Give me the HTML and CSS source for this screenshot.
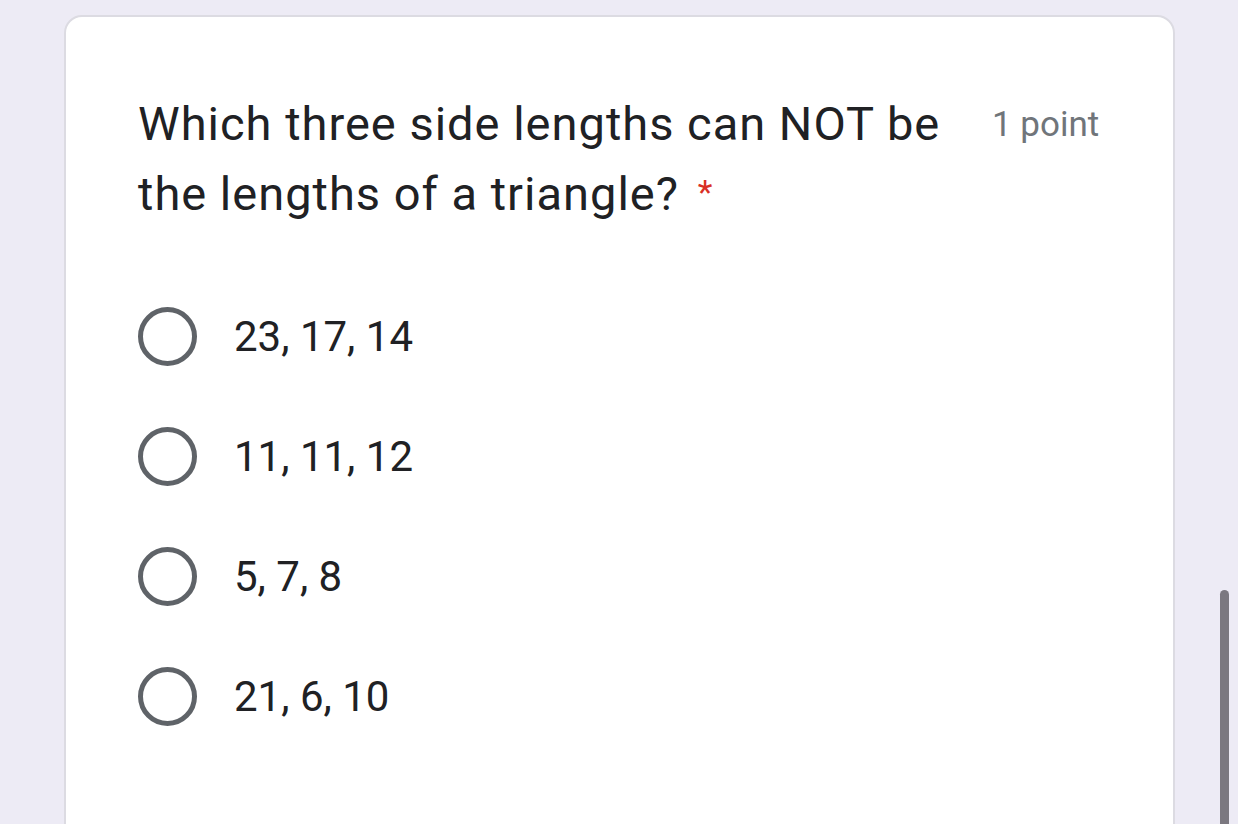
FILE: index.html
```html
<!DOCTYPE html>
<html lang="en">
<head>
    <meta charset="UTF-8">
    <meta name="viewport" content="width=device-width, initial-scale=1.0">
    <title>Quiz question</title>
    <link rel="stylesheet" href="styles.css">
</head>
<body>
    <div class="card">
        <div class="question">
            <div class="title">Which three side lengths can NOT be the lengths of a triangle? <span class="required">*</span></div>
            <div class="points">1 point</div>
        </div>

        <div class="options">
            <label class="option"><span class="radio"></span><span class="label">23, 17, 14</span></label>
            <label class="option"><span class="radio"></span><span class="label">11, 11, 12</span></label>
            <label class="option"><span class="radio"></span><span class="label">5, 7, 8</span></label>
            <label class="option"><span class="radio"></span><span class="label">21, 6, 10</span></label>
        </div>
    </div>

    <div class="scrollbar"></div>
</body>
</html>
```

FILE: styles.css
```css
body {
    font-family: Roboto, "Liberation Sans", sans-serif;
    background-color: #edebf5;
    margin: 0;
    padding: 15px 64px 0 64px;
    height: 824px;
    box-sizing: border-box;
    overflow: hidden;
}
.card {
    background-color: #fff;
    border: 2px solid #dcdbe2;
    border-radius: 18px;
    width: 1111px;
    height: 830px;
    box-sizing: border-box;
    padding: 72px 60px 0 72px;
}
.question {
    display: flex;
    align-items: flex-start;
}
.title {
    width: 820px;
    font-size: 47px;
    letter-spacing: 1px;
    line-height: 70px;
    color: #202124;
}
.required {
    color: #d93025;
    font-size: 34px;
    line-height: 1;
    vertical-align: 6px;
    margin-left: 6px;
}
.points {
    margin-left: 34px;
    margin-top: 15px;
    font-size: 35px;
    color: #70757a;
}
.options {
    margin-top: 77px;
    display: flex;
    flex-direction: column;
    gap: 60px;
}
.option {
    display: flex;
    align-items: center;
    height: 60px;
}
.radio {
    width: 59px;
    height: 59px;
    box-sizing: border-box;
    border: 5px solid #5f6368;
    border-radius: 50%;
    flex-shrink: 0;
}
.label {
    margin-left: 37px;
    font-size: 42px;
    color: #202124;
}
.scrollbar {
    position: absolute;
    left: 1220px;
    top: 590px;
    width: 9px;
    height: 250px;
    border-radius: 5px;
    background-color: #7b7880;
}
```
